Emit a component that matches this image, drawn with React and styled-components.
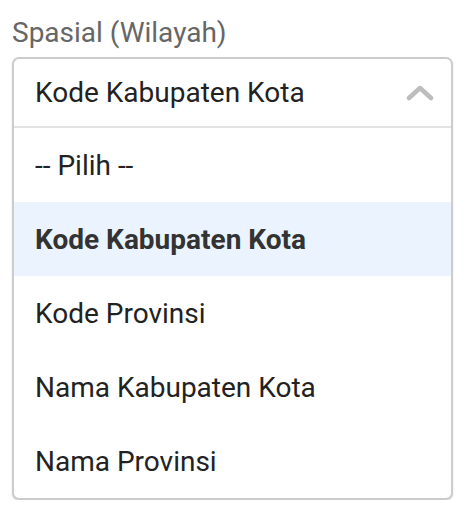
import React from 'react';
import styled, { createGlobalStyle } from 'styled-components';

const GlobalStyle = createGlobalStyle`
    body {
        margin: 0;
        background: #fff;
        font-family: Roboto, "Liberation Sans", sans-serif;
    }
`

const options = ['-- Pilih --', 'Kode Kabupaten Kota', 'Kode Provinsi', 'Nama Kabupaten Kota', 'Nama Provinsi'];
const selected = 'Kode Kabupaten Kota';

export default function App() {
    return (
        <>
            <GlobalStyle />
            <Field>
                <Label>Spasial (Wilayah)</Label>
                <Select>
                    <Header>
                        <span>{selected}</span>
                        <svg width="28" height="16" viewBox="0 0 28 16">
                            <path d="M3 13 L14 3 L25 13" fill="none" stroke="#bdbdbd" strokeWidth="4.5" strokeLinecap="round" strokeLinejoin="round" />
                        </svg>
                    </Header>
                    <Menu>
                        {options.map(opcao =>
                            <Option key={opcao} active={opcao === selected}>{opcao}</Option>
                        )}
                    </Menu>
                </Select>
            </Field>
        </>
    )
}

const Field = styled.div`
    display: flex;
    flex-direction: column;
    gap: 8px;
    padding: 17px 15px 0 12px;
`

const Label = styled.label`
    font-size: 28px;
    line-height: 32px;
    color: #666;
`

const Select = styled.div`
    border: 2px solid #ccc;
    border-radius: 7px;
    background: #fff;
    box-shadow: 0 1px 2px rgba(0, 0, 0, 0.12);
    overflow: hidden;
`

const Header = styled.div`
    display: flex;
    align-items: center;
    justify-content: space-between;
    height: 67px;
    padding: 0 17px 0 21px;
    border-bottom: 2px solid #e3e3e3;
    font-size: 28px;
    color: #222;
`

const Menu = styled.div`
    display: flex;
    flex-direction: column;
`

const Option = styled.div`
    display: flex;
    align-items: center;
    height: 74px;
    padding: 0 21px;
    font-size: 28px;
    color: ${props => props.active ? '#333' : '#222'};
    font-weight: ${props => props.active ? 700 : 400};
    background: ${props => props.active ? '#ebf4fe' : 'transparent'};
`
